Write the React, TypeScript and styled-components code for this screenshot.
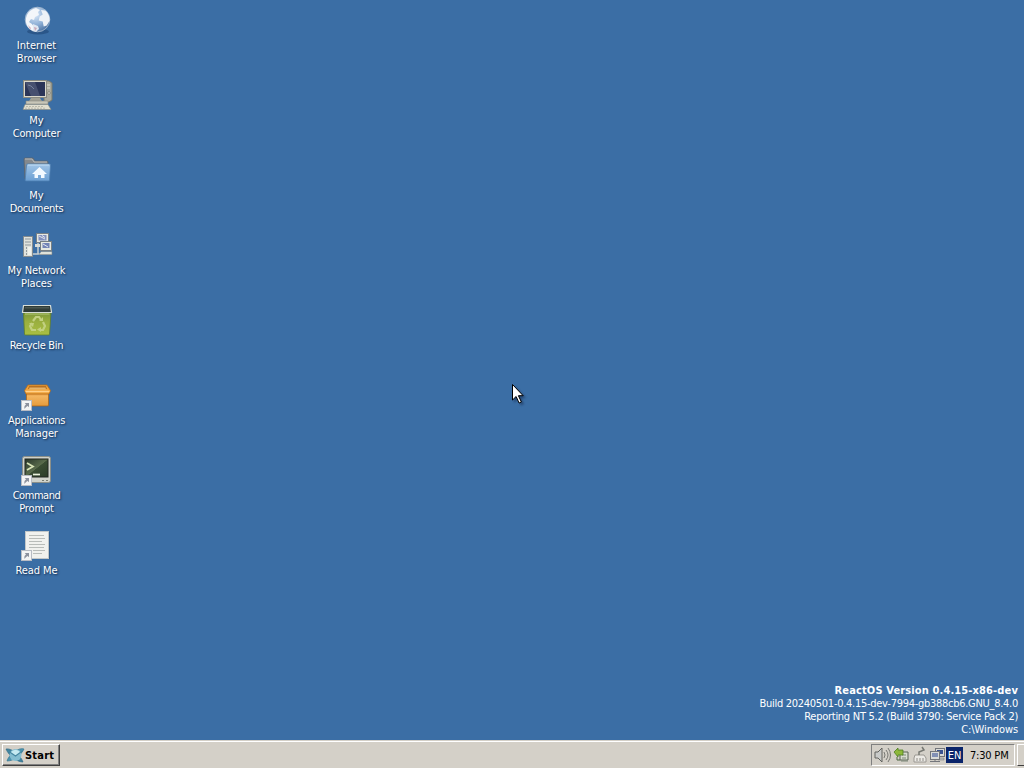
import React from "react";
import styled, { createGlobalStyle } from "styled-components";

const GlobalStyle = createGlobalStyle`
  * { box-sizing: border-box; }
  html, body { margin: 0; padding: 0; overflow: hidden; }
  body { font-family: "DejaVu Sans Condensed", "DejaVu Sans", sans-serif; font-stretch: condensed; font-size: 11px; }
`;

const Screen = styled.div`
  position: relative;
  display: flex;
  flex-direction: column;
  width: 1024px;
  height: 768px;
  background: #3b6ea5;
  cursor: default;
`;

const Desktop = styled.main`
  flex: 1;
  display: flex;
  justify-content: space-between;
  min-height: 0;
`;

const IconColumn = styled.div`
  display: flex;
  flex-direction: column;
  width: 74px;
`;

const Shortcut = styled.div`
  display: flex;
  flex-direction: column;
  align-items: center;
  height: 75px;
  padding-top: 4px;
  svg { display: block; flex: none; }
`;

const Label = styled.div`
  display: flex;
  flex-direction: column;
  align-items: center;
  margin-top: 3px;
  margin-right: 1px;
  color: #fff;
  line-height: 13px;
  white-space: nowrap;
  text-shadow: 1px 1px 2px rgba(10, 30, 60, 0.85);
`;

const Line = styled.span<{ $spacing?: number }>`
  letter-spacing: ${(p) => p.$spacing ?? 0}px;
  white-space: nowrap;
`;

const VersionInfo = styled.div`
  display: flex;
  flex-direction: column;
  align-items: flex-end;
  align-self: flex-end;
  padding: 0 6px 4px 0;
  color: #fff;
  line-height: 13px;
`;

const Strong = styled(Line)`
  font-weight: bold;
`;

const Taskbar = styled.footer`
  display: flex;
  align-items: center;
  height: 28px;
  padding: 2px 0 0 2px;
  background: #d4d0c8;
  box-shadow: inset 0 1px #d4d0c8, inset 0 2px #fff;
`;

const StartButton = styled.button`
  display: flex;
  align-items: center;
  width: 58px;
  height: 22px;
  padding: 0 0 0 2px;
  border: 1px solid;
  border-color: #fff #404040 #404040 #fff;
  box-shadow: inset -1px -1px #808080;
  background: #d4d0c8;
  color: #000;
  font: inherit;
  font-weight: bold;
  letter-spacing: 0.2px;
  svg { flex: none; }
`;

const Tray = styled.div`
  display: flex;
  align-items: center;
  width: 144px;
  height: 22px;
  margin-left: auto;
  padding-left: 2px;
  border: 1px solid;
  border-color: #808080 #fff #fff #808080;
  svg { flex: none; margin-right: 2px; }
  svg:nth-of-type(4) { margin: 0 1px 0 -1px; }
`;

const Language = styled.span`
  display: flex;
  align-items: center;
  justify-content: center;
  width: 17px;
  height: 16px;
  background: #0a246a;
  color: #fff;
`;

const Clock = styled.span`
  margin-left: 7px;
  color: #000;
  letter-spacing: -0.2px;
  white-space: nowrap;
`;

const ShowDesktop = styled.div`
  width: 7px;
  height: 22px;
  margin-left: 2px;
  border: 1px solid;
  border-color: #fff #404040 #404040 #fff;
  border-right: 0;
`;

const Pointer = styled.svg`
  position: absolute;
  left: 512px;
  top: 384px;
  filter: drop-shadow(2px 2px 1px rgba(10, 25, 55, 0.45));
`;

const Art = ({ children }: { children: React.ReactNode }) => (
  <svg width="32" height="32" viewBox="0 0 32 32">{children}</svg>
);

const ArrowBadge = () => (
  <g>
    <rect x="0.5" y="21.5" width="10" height="10" fill="#f4f4f4" stroke="#b8bcc4" />
    <path d="M3.500 30c-.5-2.500.2-3.700 1.500-4.500L3.800 24H8v4.200l-1.300-1.200c-1.400.7-2.200 1.400-3.200 3z" fill="#8d929e" />
  </g>
);

const GlobeArt = () => (
  <Art>
    <defs>
      <radialGradient id="globe" cx=".4" cy=".3" r=".75">
        <stop offset="0" stopColor="#dceafa" />
        <stop offset=".55" stopColor="#8fb0d6" />
        <stop offset="1" stopColor="#486f9f" />
      </radialGradient>
    </defs>
    <ellipse cx="17" cy="27.500" rx="11" ry="3" fill="#1d4472" opacity=".55" />
    <circle cx="16.500" cy="15.500" r="12.300" fill="url(#globe)" stroke="#aebfd2" strokeWidth=".8" />
    <path d="M6 11c2-4 5-6 9-7l4 2-2 2 1 3-4 2-1 3-3-1-2 3 3 2 2 3-1 4c-5-2-8-7-7-13z" fill="#f3f6fa" />
    <path d="M20 6l4 .5c3 2 5 6 4.700 10l-3 5-3 1-1-5-4-1 1-4 3-2z" fill="#eef2f7" />
    <path d="M12 20l5 2 1 3-3 3-3-1z" fill="#dfe7f2" />
    <path d="M7 21l3 3-1 1.500zM13 23l3 1-2 3z" fill="#c28c9c" opacity=".7" />
  </Art>
);

const ComputerArt = () => (
  <Art>
    <path d="M23 2h5l3 2v17l-3 2h-5z" fill="#a9a99c" stroke="#77786f" />
    <path d="M25 6h4M25 9h4" stroke="#deded2" />
    <circle cx="28" cy="14" r="1.300" fill="#e4e3d8" stroke="#66675f" strokeWidth=".6" />
    <rect x="2.500" y="1.500" width="23" height="17" fill="#d9d8cb" stroke="#8a8a80" />
    <rect x="4" y="3" width="20" height="14" fill="#2b3557" />
    <path d="M4 3h10l5 14H10z" fill="#46506f" />
    <path d="M7 6l3 1 3 3" stroke="#76829c" fill="none" />
    <path d="M10 19h9l2 3H8z" fill="#a2a296" />
    <path d="M5 22h22v3H5z" fill="#c8c7b9" stroke="#8b8b80" strokeWidth=".6" />
    <path d="M4 25.500h23l3 5H2z" fill="#e1dfd0" stroke="#8b8b80" strokeWidth=".6" />
    <path d="M5 27.500h18M4 29.200h20" stroke="#bab9ab" strokeDasharray="2 1" />
  </Art>
);

const DocumentsArt = () => (
  <Art>
    <defs>
      <linearGradient id="folder" x2="0" y2="1">
        <stop offset="0" stopColor="#a0c4e6" />
        <stop offset="1" stopColor="#6c9fd3" />
      </linearGradient>
    </defs>
    <path d="M3 5q0-1 1-1h8l2 3h12q1 0 1 1v17H4z" fill="#84898e" stroke="#59636d" strokeWidth=".8" />
    <path d="M4 5h7l2 3h13" stroke="#b7b9b8" fill="none" />
    <path d="M6.500 10h22q1 0 1 1l-1 15q0 1-1 1H5q-1 0-.8-1l1.300-15q0-1 1-1z" fill="url(#folder)" stroke="#4c7eb0" strokeWidth=".8" />
    <path d="M7 11h21" stroke="#c5def3" />
    <path d="M18.500 13l7.500 7h-2.500v4h-3.500v-3h-3v3H13.500v-4H11z" fill="#f3f9ff" />
  </Art>
);

const NetworkArt = () => (
  <Art>
    <path d="M11 25h20M17 14v11" stroke="#c9cfd1" strokeWidth="1.500" />
    <rect x="2.500" y="7.500" width="9" height="20" fill="#e0e2dc" stroke="#848b8f" />
    <path d="M4 10h6M4 13h6M4 16h6" stroke="#8f989d" />
    <path d="M5 19h1M5 22h1M5 25h1" stroke="#7b858b" strokeWidth="1.500" />
    <rect x="7" y="18" width="3" height="8" fill="#f0f2ed" />
    <rect x="15.500" y="4.500" width="12" height="9" fill="#e7e9e2" stroke="#777f85" />
    <rect x="17.500" y="6" width="8" height="5.500" fill="#8290bd" />
    <path d="M18 7l6 3M21 6.500l3 2" stroke="#e3e6ef" />
    <path d="M14 15h5v3h-5z" fill="#d9ddd9" />
    <rect x="19.500" y="12.500" width="11" height="9" fill="#e7e9e2" stroke="#777f85" />
    <rect x="21.500" y="14" width="7" height="5" fill="#7384b7" />
    <path d="M22 15l5 3" stroke="#e3e6ef" />
    <path d="M20 22.500h11v3H18z" fill="#dfe1d9" stroke="#777f85" strokeWidth=".6" />
  </Art>
);

const RecycleArt = () => (
  <Art>
    <defs>
      <linearGradient id="bin" x2="0" y2="1">
        <stop offset="0" stopColor="#7d983a" />
        <stop offset=".4" stopColor="#9aaf3f" />
        <stop offset="1" stopColor="#a9be42" />
      </linearGradient>
    </defs>
    <path d="M2.500 9h27.500l-1.500 21q-.1 1-1 1h-23q-1 0-1-1z" fill="url(#bin)" stroke="#607d28" strokeWidth=".8" />
    <path d="M4 10h24.500" stroke="#b7ca78" />
    <path d="M2.500 1.500h27l1 7H1.500z" fill="#303c38" stroke="#d7ddd6" strokeWidth="1.200" />
    <path d="M4 3h24v1.500H4z" fill="#4a5750" />
    <g stroke="#c2d080" strokeWidth="2.200" fill="none">
      <path d="M12 17l3-4h3l2 3M22 18l2 4-2 4h-3M15 26h-4l-2-4 2-3" />
    </g>
    <path d="M18 17h4v-4zM20 23v5l-4-2.500zM8 19h5l-1 4z" fill="#c2d080" />
  </Art>
);

const PackageArt = () => (
  <Art>
    <defs>
      <linearGradient id="package" x2="0" y2="1">
        <stop offset="0" stopColor="#dd8a2c" />
        <stop offset=".3" stopColor="#f3b560" />
        <stop offset="1" stopColor="#e59b3c" />
      </linearGradient>
    </defs>
    <path d="M5.500 13h22v13q0 1-1 1h-20q-1 0-1-1z" fill="url(#package)" stroke="#ad620f" strokeWidth=".7" />
    <path d="M7 6h19l3.500 5.500L28 15H5l-1.500-3.500z" fill="#efa33d" stroke="#b66b17" strokeWidth=".8" />
    <path d="M8 7h17l1 3H7z" fill="#b87020" />
    <path d="M8.500 8.500h16l.5 2H8z" fill="#e5b36a" />
    <path d="M4.500 12.500h24" stroke="#ffd18a" strokeWidth="1.500" />
    <ArrowBadge />
  </Art>
);

const CommandArt = () => (
  <Art>
    <defs>
      <linearGradient id="terminal" x2="1" y2="1">
        <stop offset="0" stopColor="#28362a" />
        <stop offset=".5" stopColor="#5a6c4c" />
        <stop offset=".52" stopColor="#3a4d33" />
        <stop offset="1" stopColor="#2b3b27" />
      </linearGradient>
    </defs>
    <rect x="1.500" y="2.500" width="28" height="26" rx="2" fill="#d0d2ca" stroke="#8b8f89" />
    <rect x="4" y="5" width="23" height="18" fill="url(#terminal)" stroke="#202720" />
    <path d="M6 9l6 3.500L6 16" stroke="#d7e3b5" strokeWidth="1.800" fill="none" />
    <path d="M12 20.500h7" stroke="#e9f0db" strokeWidth="1.700" />
    <path d="M21 26.500h2M25 26.500h2" stroke="#777d73" />
    <ArrowBadge />
  </Art>
);

const ReadMeArt = () => (
  <Art>
    <path d="M5 3h24v27H5z" fill="#294e77" opacity=".5" />
    <rect x="4.500" y="2.500" width="23" height="27" fill="#f1f1ee" stroke="#c2c7c9" />
    <path d="M8 6.500h15M8 9.500h16M8 12.500h13M8 15.500h16M8 18.500h15M12 21.500h12M12 24.500h9" stroke="#b9bcb9" />
    <ArrowBadge />
  </Art>
);

const StartLogo = () => (
  <svg width="20" height="18" viewBox="0 0 20 18">
    <path d="M1 3c5-1 14 5 17 13-6 0-14-6-17-13z" fill="#3f829e" stroke="#2d6885" strokeWidth=".7" />
    <path d="M19 3C14 1 4 8 2 15c7 0 14-6 17-12z" fill="#4b94b0" stroke="#337591" strokeWidth=".7" />
    <circle cx="10.500" cy="9" r="6" fill="#84bdd0" />
    <path d="M5.500 6.500q5-5.500 10 0l-5 3.500z" fill="#c5eaf1" />
    <path d="M2.500 4.500l8 5.500 7.500-5.500" stroke="#4587a1" strokeWidth="1.100" fill="none" />
  </svg>
);

const SpeakerArt = () => (
  <svg width="17" height="18" viewBox="0 0 17 18">
    <path d="M1 6h3l4-4v14l-4-4H1z" fill="#c9cac8" stroke="#62635f" />
    <path d="M10 6q2 3 0 6M12 4q4 5 0 10M14 2q5 7 0 14" fill="none" stroke="#6c6d69" strokeWidth=".9" />
  </svg>
);

const SafelyRemoveArt = () => (
  <svg width="17" height="16" viewBox="0 0 17 16">
    <path d="M7 5h8v8H7z" fill="#d9ddd0" stroke="#586254" />
    <path d="M9 8h4M9 11h4M8 14h7" stroke="#7d8779" />
    <path d="M1 5l4-4v2h5v5H5v2z" fill="#8eb83a" stroke="#4d7d20" strokeWidth=".8" />
    <path d="M4 10v3h3" fill="none" stroke="#4d6741" />
  </svg>
);

const PlugArt = () => (
  <svg width="16" height="18" viewBox="0 0 16 18">
    <path d="M3 9h9l2 3v4H2v-4z" fill="#eceae5" stroke="#9b9892" />
    <path d="M7 9V6l5-2-2-3" fill="none" stroke="#777872" strokeWidth="1.500" />
    <path d="M5 12v3M8 12v3M11 12v3" stroke="#8f8c86" />
  </svg>
);

const ConnectionArt = () => (
  <svg width="16" height="16" viewBox="0 0 16 16">
    <rect x="6.500" y="1.500" width="9" height="8" fill="#dadbd8" stroke="#74767b" />
    <rect x="8" y="3" width="6" height="4" fill="#3a5390" />
    <path d="M9 11h6v2H9z" fill="#b9bdba" stroke="#74767b" strokeWidth=".5" />
    <rect x="1.500" y="4.500" width="9" height="8" fill="#dadbd8" stroke="#74767b" />
    <rect x="3" y="6" width="6" height="4" fill="#8290b5" />
    <path d="M1 14.500h10M6 12v2" stroke="#74767b" />
  </svg>
);

type LabelLine = { text: string; spacing?: number };

const items: { art: React.ReactNode; lines: LabelLine[] }[] = [
  { art: <GlobeArt />, lines: [{ text: "Internet" }, { text: "Browser", spacing: -0.1 }] },
  { art: <ComputerArt />, lines: [{ text: "My" }, { text: "Computer", spacing: -0.2 }] },
  { art: <DocumentsArt />, lines: [{ text: "My" }, { text: "Documents", spacing: -0.3 }] },
  { art: <NetworkArt />, lines: [{ text: "My Network", spacing: -0.1 }, { text: "Places", spacing: -0.1 }] },
  { art: <RecycleArt />, lines: [{ text: "Recycle Bin", spacing: -0.33 }] },
  { art: <PackageArt />, lines: [{ text: "Applications", spacing: -0.27 }, { text: "Manager", spacing: -0.1 }] },
  { art: <CommandArt />, lines: [{ text: "Command", spacing: -0.45 }, { text: "Prompt", spacing: -0.15 }] },
  { art: <ReadMeArt />, lines: [{ text: "Read Me", spacing: -0.1 }] },
];

export default function App() {
  return (
    <Screen>
      <GlobalStyle />
      <Desktop>
        <IconColumn>
          {items.map((item) => (
            <Shortcut key={item.lines.map((line) => line.text).join(" ")}>
              {item.art}
              <Label>
                {item.lines.map((line) => (
                  <Line key={line.text} $spacing={line.spacing}>{line.text}</Line>
                ))}
              </Label>
            </Shortcut>
          ))}
        </IconColumn>
        <VersionInfo>
          <Strong $spacing={0.13}>ReactOS Version 0.4.15-x86-dev</Strong>
          <Line $spacing={-0.28}>Build 20240501-0.4.15-dev-7994-gb388cb6.GNU_8.4.0</Line>
          <Line $spacing={-0.27}>Reporting NT 5.2 (Build 3790: Service Pack 2)</Line>
          <Line $spacing={-0.1}>C:\Windows</Line>
        </VersionInfo>
      </Desktop>
      <Taskbar>
        <StartButton><StartLogo />Start</StartButton>
        <Tray>
          <SpeakerArt />
          <SafelyRemoveArt />
          <PlugArt />
          <ConnectionArt />
          <Language>EN</Language>
          <Clock>7:30 PM</Clock>
        </Tray>
        <ShowDesktop />
      </Taskbar>
      <Pointer width="12" height="20" viewBox="0 0 12 20">
        <path d="M.5.500v15.500l3.600-3.500 3 6.500 2.300-1-3-6.300h4.800z" fill="#fff" stroke="#000" />
      </Pointer>
    </Screen>
  );
}
